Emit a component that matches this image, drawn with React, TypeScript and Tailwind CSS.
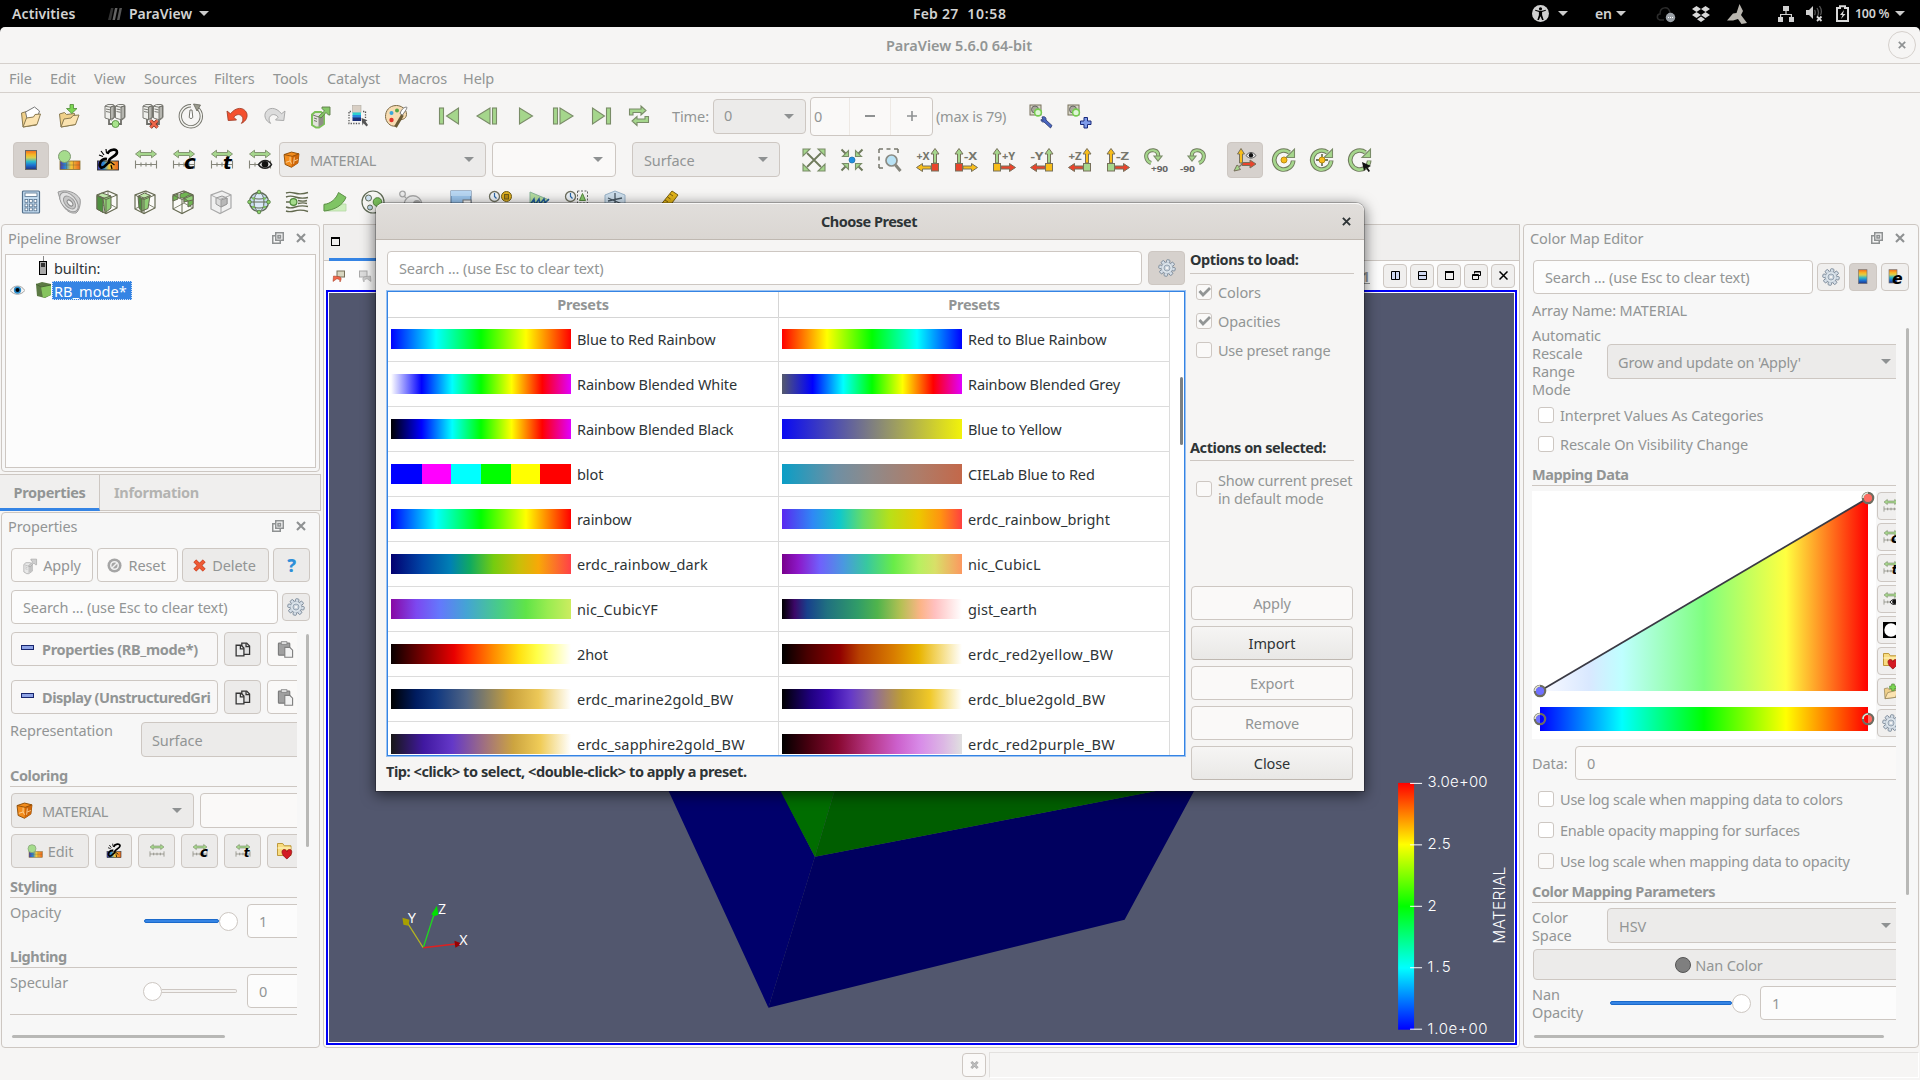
import React from "react";
import type { ReactNode } from "react";

type P = { children?: ReactNode; className?: string };

const G = "#a5d68c";
const D = "#6f7a5c";

function Ico({ children, className = "w-6 h-6" }: P) {
  return (
    <svg viewBox="0 0 24 24" className={"shrink-0 overflow-visible " + className} fill="none">
      {children}
    </svg>
  );
}

/* ---------- icon drawings ---------- */

const OpenI = () => (
  <Ico>
    <g stroke="#8a7a50" strokeWidth="1">
      <path d="M2.500 9l5-1.500 2 2 4-.5 4 12-13.500 2z" fill="#f0d08a" />
      <path d="M6.500 8l9-5 5 4-2 6-10 4z" fill="#fff" stroke="#777" />
      <path d="M4 23L7.500 14l7-1 1.500-2.500 5.500-.5L18 20.500z" fill="#fbe3b0" />
    </g>
  </Ico>
);
const SaveI = () => (
  <Ico>
    <g stroke="#8a7a50">
      <path d="M2.500 10l5-1.500 2 2 8-1 1 11L4 23z" fill="#f0d08a" />
      <path d="M4 23l3-8 7-1 2-2.500 6-.5-3.500 9.500z" fill="#fbe3b0" />
      <path d="M13 .5h3.500v4H20l-5.200 5L9.500 4.500H13z" fill="#7cd653" stroke="#4f8a36" strokeWidth=".8" />
    </g>
  </Ico>
);
const Server = ({ x }: { x: number }) => (
  <g stroke="#6e6e68" strokeWidth=".9">
    <path d={`M${x} 2l3-1.500h5l1.500 1v12l-3 2.500-6.500-2z`} fill="#efefec" />
    <path d={`M${x + 5.5} 3v12.500l3.500-2V1.800z`} fill="#b5b5af" />
    <path d={`M${x} 2.200l5.500 1 3.500-1.500M${x + 1} 5l4 .8M${x + 1} 7.500l4 .8`} />
  </g>
);
const ConnectI = () => (
  <Ico>
    <path d="M6 14v6h12v-6" stroke="#6e6e68" strokeWidth="1.800" />
    <Server x={2} /><Server x={12.5} />
    <circle cx="12.500" cy="20" r="3.500" fill="#a8e48c" stroke="#5f9a4a" />
  </Ico>
);
const DisconnectI = () => (
  <Ico>
    <path d="M6 14v6h12v-6" stroke="#6e6e68" strokeWidth="1.800" />
    <Server x={2} /><Server x={12.5} />
    <path d="M9.500 16.500l7 7M16.500 16.500l-7 7" stroke="#7a2b1e" strokeWidth="3.400" />
    <path d="M9.500 16.500l7 7M16.500 16.500l-7 7" stroke="#f0674a" strokeWidth="2.200" />
  </Ico>
);
const TimerI = () => (
  <Ico>
    <path d="M18 3.800A10.500 10.500 0 1 1 12 1.800" stroke="#74746c" strokeWidth="3.400" />
    <path d="M18 3.800A10.500 10.500 0 1 1 12 1.800" stroke="#f2f2ee" strokeWidth="1.500" />
    <path d="M14.500 0l7 1-3.500 6z" fill="#9a9a8e" stroke="#66665c" strokeWidth=".8" />
    <path d="M11 6h2l.8 7.500-1.800 1.200-1.800-1.200z" fill="#fff" stroke="#74746c" />
  </Ico>
);
const Arc = ({ fill, stroke }: { fill: string; stroke: string }) => (
  <path d="M2 7l1.200 9.500L11.500 16 8.800 13.200c2.400-3.400 7-3.600 8.800.2.700 2 .2 4-1.200 6 5-2.400 6.600-7 5.200-10.500C19 3 11 2.500 5.500 9.800z" fill={fill} stroke={stroke} strokeWidth=".9" />
);
const UndoI = () => <Ico><Arc fill="#f4502e" stroke="#a5412a" /></Ico>;
const RedoI = () => <Ico><g transform="translate(24 0) scale(-1 1)"><Arc fill="#dcdcdc" stroke="#a3a3a3" /></g></Ico>;
const ApplyI = ({ gray, className = "w-6 h-6" }: { gray?: boolean; className?: string }) => (
  <Ico className={className}>
    <path d="M4 10.500l3-2.500h6l3 2.500V20l-5 3.500h-3L4 21z" fill={gray ? "#e8e8e8" : "#e2e2dc"} stroke={gray ? "#a5a5a5" : "#7cc158"} strokeWidth={gray ? "1" : "2"} />
    <path d="M10.500 13v10l5-3v-9.500z" fill={gray ? "#c4c4c4" : "#8f8f86"} /><path d="M5 11l5.500 2 5-2.500M6 14l3 1M6 16.500l3 1" stroke={gray ? "#b5b5b5" : "#77776c"} />
    <path d="M10.500 12.500l6-5.500L14 4.500V3h8v8h-1.500L18 8.500 13 14z" fill={gray ? "#cfcfcf" : "#86c768"} stroke={gray ? "#a0a0a0" : "#5e7d48"} strokeWidth=".9" />
  </Ico>
);
const PickI = () => (
  <Ico>
    <rect x="6.500" y="1.500" width="8.500" height="7" fill="#d9cfc4" stroke="#b0aaa0" strokeWidth=".6" />
    <rect x="6.500" y="8.500" width="8.500" height="3" fill="#2bd0d0" /><rect x="6.500" y="11" width="8.500" height="3" fill="#2a86dc" /><rect x="6.500" y="13.500" width="8.500" height="3.500" fill="#1c2f77" />
    <path d="M5 7.500H3v12h12M17 7.500h2.500V14" stroke="#555" strokeDasharray="1.300 1.300" strokeWidth="1.300" />
    <path d="M15.500 14l6 2.200-2 1.300 2.500 3.500-1.500 1.500-3-3.200-1 2.200z" fill="#555" />
  </Ico>
);
const PaletteI = () => (
  <Ico>
    <path d="M12.500 1.500C5 1.500 1.500 7 1.500 12.500S6.500 23 11 22c3-.5 1-4 3.500-5.500 3-1.500 7.500-.5 8-6C22.800 5 17 1.500 12.500 1.500z" fill="#f7dcb2" stroke="#7c6a45" />
    <circle cx="13" cy="6.500" r="2" fill="#57a544" /><circle cx="7.500" cy="9" r="2" fill="#3aa7dd" />
    <circle cx="7.500" cy="16" r="2.200" fill="#e0362b" />
    <path d="M18.500 11L11.500 23" stroke="#6c5c36" strokeWidth="3" /><path d="M22.500 3c1 1-.5 3-4 8l-2.500-1.500C18 4 20.500 3.500 22.500 3z" fill="#fff" stroke="#777" />
  </Ico>
);
const s1 = { fill: G, stroke: "#7a8c68", strokeWidth: 1.1 };
const FirstI = () => <Ico><rect x="2.500" y="4" width="4" height="16" {...s1} /><path d="M21.500 4v16L9.500 12z" {...s1} /></Ico>;
const PrevI = () => <Ico><rect x="17.500" y="4" width="4" height="16" {...s1} /><path d="M15 4v16L2 12z" {...s1} /></Ico>;
const PlayI = () => <Ico><path d="M6.500 4v16l13-8z" {...s1} /></Ico>;
const NextI = () => <Ico><rect x="2.500" y="4" width="4" height="16" {...s1} /><path d="M9 4v16l13-8z" {...s1} /></Ico>;
const LastI = () => <Ico><rect x="17.500" y="4" width="4" height="16" {...s1} /><path d="M3.500 4v16l12-8z" {...s1} /></Ico>;
const LoopI = () => (
  <Ico>
    <path d="M2.500 11V5h11.500V2l5 4.500-5 4.500V8.500H6V11z" {...s1} />
    <path d="M21.500 12.500v6H10v3l-5-4.500 5-4.500V15h8v-2.500z" {...s1} />
  </Ico>
);

const Rainbow = ({ id }: { id: string }) => (
  <defs>
    <linearGradient id={id} x1="0" y1="0" x2="0" y2="1">
      <stop offset="0" stopColor="#ee6a22" /><stop offset=".22" stopColor="#f8b524" /><stop offset=".38" stopColor="#d8cf50" />
      <stop offset=".58" stopColor="#2fb8c8" /><stop offset=".78" stopColor="#1b6fd0" /><stop offset="1" stopColor="#22307e" />
    </linearGradient>
    <linearGradient id={id + "h"}>
      <stop offset="0" stopColor="#4a3aa8" /><stop offset=".3" stopColor="#2a8fd6" /><stop offset=".55" stopColor="#f3c93a" /><stop offset="1" stopColor="#e8641e" />
    </linearGradient>
  </defs>
);
const BarI = () => <Ico><Rainbow id="rb1" /><rect x="6.500" y="2.500" width="11" height="19" fill="url(#rb1)" stroke="#666" strokeWidth="1" /></Ico>;
const EditColorI = ({ className = "w-6 h-6" }: P) => (
  <Ico className={className}>
    <Rainbow id="rb2" />
    <rect x="3" y="13" width="20" height="8.500" fill="url(#rb2h)" stroke="#8a7030" strokeWidth=".8" />
    <path d="M3 17h20M9.500 13v8M16.500 13v8" stroke="#6a5a30" strokeWidth=".6" opacity=".6" />
    <circle cx="7.500" cy="8.500" r="6" fill="#a5dc8c" stroke="#7f9a72" />
  </Ico>
);
const SepColorI = ({ className = "w-6 h-6" }: P) => (
  <Ico className={className}>
    <Rainbow id="rb3" />
    <rect x="1.500" y="13" width="21" height="9" fill="url(#rb3h)" stroke="#333" strokeWidth=".9" />
    <path d="M11.500 6c1.500-5 10-6 9.500-1.500S12.500 9 13 13.500M11 11c-6-1-9 6-6 8.500 4 1.500 5-5 9.500-5.500" stroke="#000" strokeWidth="2.600" />
    <path d="M5 3l3 4M10 1l.5 4M3 7l4 1.500M14.500 14l4 3M15 17l1 4" stroke="#000" strokeWidth="1.200" />
  </Ico>
);
function RangeI({ k, className = "w-6 h-6" }: { k?: string; className?: string }) {
  return (
    <Ico className={className}>
      <path d="M1.500 6L6.500 2.200v2.300h11V2.200l5 3.800-5 3.800V7.500h-11v2.300z" {...s1} strokeWidth={0.9} />
      <path d="M1.500 12.500v8M22.500 12.500v8M1.500 16.500h21M7 14.500v4M12 14.500v4M17 14.500v4" stroke="#85857a" strokeWidth="1.100" />
      {k && k !== "eye" && <text x={k === "c" ? 12 : 13} y="21" fontFamily="DejaVu Sans" fontSize={k === "c" ? 20 : 18} fontWeight="bold" fontStyle="italic" fill="#000">{k}</text>}
      {k === "eye" && (
        <g><path d="M10.500 16.500c4-5.500 10-5.500 13 0-3 5-10 5-13 0z" fill="#e8e8e8" stroke="#222" strokeWidth="1.500" /><circle cx="17" cy="16.200" r="3.300" fill="#111" /></g>
      )}
    </Ico>
  );
}
const OrangeCube = ({ className = "w-[17px] h-[17px]" }: P) => (
  <Ico className={className}>
    <path d="M1.500 5L12 1.500 22.500 4 21 17l-9 6-9-4z" fill="#f28c1d" stroke="#8c4c08" strokeWidth="1.300" />
    <path d="M13 7.500L22.500 4 21 17l-9 6z" fill="#cf6608" /><path d="M1.500 5L13 7.500 22.500 4" stroke="#8c4c08" strokeWidth="1.200" />
    <path d="M4 16l6-2V8M10 14l2 4M16 9l-1 9M16 14l5-2" stroke="#ffdba8" strokeWidth="1.200" />
  </Ico>
);
const ResetCamI = () => (
  <Ico>
    <path d="M5 5l14 14M19 5L5 19" stroke={D} strokeWidth="1.800" />
    <g {...s1}><path d="M1 1h7L1 8zM23 1v7l-7-7zM1 23v-7l7 7zM23 23h-7l7-7z" /></g>
  </Ico>
);
const ZoomDataI = () => (
  <Ico>
    <path d="M1.500 1.500l5 5M22.500 1.500l-5 5M1.500 22.500l5-5M22.500 22.500l-5-5" stroke={D} strokeWidth="2" />
    <g {...s1}><path d="M8.500 8.500H2.500L8.500 2.500zM15.500 8.500h6L15.500 2.500zM8.500 15.500h-6L8.500 21.500zM15.500 15.500h6L15.500 21.500z" /></g>
    <circle cx="12" cy="12" r="3" fill="#1f8fe0" stroke="#1a6ba8" strokeWidth=".7" />
  </Ico>
);
const ZoomBoxI = () => (
  <Ico>
    <path d="M1 1h19M1 1v19M20 1v4M1 20h5" stroke="#77776c" strokeWidth="1.500" strokeDasharray="4 3.500" />
    <circle cx="13.500" cy="12.500" r="5.500" fill="#b9e2f5" stroke="#8b8b84" strokeWidth="1.700" />
    <path d="M17.500 17l5 6" stroke="#85857c" strokeWidth="3" />
  </Ico>
);
function AxisI({ label, flip, up, side, box }: { label: string; flip?: boolean; up: string; side: string; box: string }) {
  return (
    <Ico>
      <g transform={flip ? "translate(24 0) scale(-1 1)" : undefined} stroke="#77705a" strokeWidth="1">
        <path d="M3.500 15V6H1L5 .5 9 6H6.500v9z" fill={up} />
        <path d="M9 18h8.500v-2.500l6 4-6 4V21H9z" fill={side} />
        <rect x="1.500" y="15.500" width="7" height="7.500" fill={box} />
      </g>
      <text x={flip ? 0.5 : 10} y="12" fontFamily="Noto Sans" fontSize="11" fontWeight="bold" fill="#77776c" textLength="13" lengthAdjust="spacingAndGlyphs">{label}</text>
    </Ico>
  );
}
const R = "#e8442c", Y = "#f8bd1a";
const RotI = ({ neg }: { neg?: boolean }) => (
  <Ico>
    <g transform={neg ? "translate(24 0) scale(-1 1)" : undefined}>
      <path d="M7 15C1.500 13 1 6.500 4 4s8.500-2.500 10 1.500l.3 3" stroke={D} strokeWidth="4" />
      <path d="M7 15C1.500 13 1 6.500 4 4s8.500-2.500 10 1.500l.3 3" stroke={G} strokeWidth="2.200" />
      <path d="M10 8h8l-4 5z" {...s1} />
    </g>
    <text x={neg ? -2 : 7} y="24" fontFamily="Noto Sans" fontSize="9" fontWeight="bold" fill="#666" textLength={neg ? 15 : 17} lengthAdjust="spacingAndGlyphs">{neg ? "-90" : "+90"}</text>
  </Ico>
);
const AxesEyeI = () => (
  <Ico>
    <g stroke="#77705a">
      <path d="M6.500 15V6h-2L8 .5 11.500 6h-2v9z" fill={Y} /><path d="M9 14.500h8v-2.500l6 4-6 4v-2.500H9z" fill={R} />
      <path d="M10 15l-4 3.500-2-1.500L1 23l6.500-1.500-1.500-2z" fill={G} />
    </g>
    <path d="M13 7.500c3-4 7-4 10 0-3 3.500-7 3.500-10 0z" fill="#eee" stroke="#555" /><circle cx="18" cy="7.300" r="2.200" fill="#111" />
  </Ico>
);
function CenterI({ kind }: { kind: number }) {
  return (
    <Ico>
      <path d="M21.200 12.500A9.500 9.500 0 1 1 17.500 4.500" stroke={D} strokeWidth="4.600" /><path d="M21.200 13.200A9.500 9.500 0 1 1 17.500 4.500" stroke={G} strokeWidth="2.600" />
      <path d="M22.500 1v8.500h-8.500z" {...s1} />
      {kind === 1 && <path d="M12 6v12M6 12h12" stroke={D} strokeWidth="1.800" />}
      {kind < 2 && <circle cx="12" cy="12" r="3" fill={Y} stroke="#b98b14" />}
      {kind === 2 && <path d="M14 14l9 4-3.500 1.500L22 23l-1.500 1-2.500-4-2 3z" fill="#111" />}
    </Ico>
  );
}
const CamI = ({ plus }: { plus?: boolean }) => (
  <Ico>
    <rect x="1" y="1" width="11" height="10" fill="#d8d6c8" stroke="#77705a" /><circle cx="6" cy="5.500" r="3.500" fill="#aaa89c" stroke="#666" />
    <circle cx="9" cy="8.500" r="3.400" fill="#dff6d6" stroke="#76cc50" strokeWidth="1.600" />
    {plus ? <path d="M17 13.500h3.500V17H24v3.500h-3.500V24H17v-3.500h-3.500V17H17z" fill="#7f9cea" stroke="#1a2a7a" /> :
      <path d="M13 13c2-1 4.500 0 4 3l6 5.500-1.500 2.500-6.500-6c-2 .5-3-1-3-2.500l2 .8z" fill="#4a66c0" stroke="#27356b" strokeWidth=".8" />}
  </Ico>
);

const CalcI = () => (
  <Ico>
    <rect x="3.500" y="1" width="17" height="22" rx="1" fill="#c4dcf0" stroke="#54708c" strokeWidth="1.200" />
    <rect x="6" y="3" width="12" height="3.500" fill="#fff" stroke="#54708c" strokeWidth=".8" />
    {[9.5, 14, 18].map((y) => [6, 10.5, 15].map((x) => <rect key={`${x}-${y}`} x={x} y={y} width="2.800" height="2.800" fill="#fff" stroke="#54708c" strokeWidth=".8" />))}
  </Ico>
);
const ContourI = () => (
  <Ico>
    <path d="M1 2c8-3 18 0 22 7 1 5-1 12-4 14-8 1-14-5-18-21z" fill="#cfcfcf" stroke="#999" />
    <ellipse cx="12" cy="12" rx="7" ry="11.500" transform="rotate(-42 12 12)" fill="#e2e2e2" stroke="#999" />
    <ellipse cx="12.500" cy="12.500" rx="4.600" ry="7.500" transform="rotate(-42 12.500 12.500)" fill="#c6c6c6" stroke="#999" />
    <ellipse cx="13" cy="13" rx="2" ry="3.600" transform="rotate(-42 13 13)" fill="#efefef" stroke="#888" />
  </Ico>
);
function CubeI({ kind }: { kind: number }) {
  const gray = kind === 3;
  const st = gray ? "#a8a8a8" : "#666a52";
  return (
    <Ico>
      <path d="M13 1l9 4v13l-11 5.500L2 19V5z" fill={gray ? "#f0f0f0" : "#fafaf7"} stroke={st} strokeWidth="1.200" />
      {!gray && <path d="M13 1v12l9 5M13 13L2 19" stroke={st} strokeWidth=".8" />}
      {kind === 0 && <g stroke={st}><path d="M2 5.500L7 3l9 3-6 2.500z" fill="#bfe6aa" /><path d="M2 5.500l6 3v14L2 19z" fill="#4f9040" /><path d="M8 8.500L16 6v12l-6 5z" fill="#90cf76" /></g>}
      {kind === 1 && <g stroke={st}><path d="M5.500 6l6-3 6 2.500-5 3z" fill="#bfe6aa" /><path d="M5 6l4 3v13l-3-4z" fill="#4f9040" /><path d="M9 9l8-3.500-2 13L9 21z" fill="#90cf76" /></g>}
      {kind === 2 && <g stroke={st}><path d="M2 6l5-2v5l-5 2zM9 4l6-2 7 3v9l-5 3v-6l-4 1V8L9 8z" fill="#6fb552" /><path d="M13 8l5-3 4 1v4l-5 1z" fill="#90cf76" /></g>}
      {gray && <path d="M7 8l6-2 5 2v6l-6 3-5-3z" fill="#dcdcdc" stroke="#999" />}
      {gray && <path d="M12 10v7l6-3V8z" fill="#b8b8b8" stroke="#999" />}
      <path d="M2 5l9 4.500L22 5" stroke={st} strokeWidth="1" /><path d={gray ? "M12 17v6" : "M11 9.500v14"} stroke={st} strokeWidth="1" />
    </Ico>
  );
}
const GlyphI = () => (
  <Ico>
    <circle cx="12" cy="12" r="9.500" fill="#c5dbf2" stroke="#5f6a55" strokeWidth="1.300" />
    <ellipse cx="12" cy="12" rx="5" ry="9.500" stroke="#5f6a55" fill="#dbe9f8" /><path d="M4 7.500c5 2 11 2 16 0M4 16.500c5 2 11 2 16 0M2.500 12h19" stroke="#5f6a55" />
    {[[12, 2], [12, 22], [2.5, 12], [21.5, 12]].map(([x, y]) => <circle key={`${x}${y}`} cx={x} cy={y} r="1.800" fill="#8dd36e" stroke="#4f7a3c" strokeWidth=".8" />)}
    {[[6.5, 8.5], [17.5, 8.5], [6.5, 17], [17.5, 17]].map(([x, y]) => <circle key={`${x}${y}`} cx={x} cy={y} r="1.300" fill="#7cc65c" />)}
  </Ico>
);
const StreamI = () => (
  <Ico>
    <path d="M1 3c8-3 9 4 22-.5M1 7c9-3.500 9 3.500 22 .5M1 17c9 3.500 9-3.500 22-.5M1 21c8 3 9-4 22 .5M1 12h4M13 10.500c4 1 6 1 9 0M13 13.500c4-1 6-1 9 0" stroke="#62694e" strokeWidth="1.400" />
    <circle cx="8.500" cy="12" r="3.400" fill="#a5dc8c" stroke="#4f8a3a" strokeWidth="1.200" />
  </Ico>
);
const WarpI = () => (
  <Ico>
    <path d="M1 21v-7h22v7z" fill="#cdeebd" stroke="#b5d8a5" strokeWidth=".8" />
    <path d="M1 14.500C8 13.500 13 9 15.500 2.500l7.500 4.800C20 15 12 20 1 21z" fill="#7fc464" stroke="#5e8f48" />
  </Ico>
);
const GroupI = ({ gray }: { gray?: boolean }) =>
  gray ? (
    <Ico><circle cx="3.500" cy="4" r="2.800" stroke="#a8a8a8" fill="#eee" strokeWidth="1.300" /><path d="M5 10c3-6 14-8 18 2v12H9z" fill="#f0f0f0" /><path d="M5 14C7 3 21 3 23 14" stroke="#a8a8a8" strokeWidth="1.300" /><circle cx="18" cy="14" r="4" fill="#aaa" /><path d="M5 6l2 2" stroke="#aaa" strokeWidth="1.300" /></Ico>
  ) : (
    <Ico><circle cx="12" cy="12" r="11" fill="#f7f7f3" stroke="#5f6a55" strokeWidth="1.200" /><circle cx="16.500" cy="12" r="4.300" fill="#7cc45e" stroke="#4f7f38" /><circle cx="7.500" cy="8" r="3" fill="#cfe2f2" stroke="#5f6a55" /><circle cx="9" cy="17.500" r="2.500" fill="#bcd6e8" stroke="#5f6a55" /></Ico>
  );
const ExtractI = () => <Ico><rect x="2" y="1" width="20" height="16" fill="#9cc6ee" stroke="#56789c" /><rect x="2" y="1" width="20" height="5" fill="#b9d8f4" /><rect x="14" y="10" width="8" height="7" fill="#fff" stroke="#777" /></Ico>;
const ClockI = ({ g }: { g?: boolean }) => (
  <Ico><circle cx="5.500" cy="6.500" r="5" fill="#eef3f8" stroke="#6f705f" strokeWidth="1.300" /><path d="M5.500 3v3.500l2 2" stroke="#2a67a8" strokeWidth="1.200" />
    {g ? <g><path d="M12.500 1h10v12h-10z" stroke="#666" strokeDasharray="2 1.500" /><path d="M14.500 10.500l3-7 3 7z" fill="#8acb6d" stroke="#57883f" /></g> : <g><circle cx="17.500" cy="6.500" r="5" fill="#e0b020" stroke="#705d18" /><rect x="15.500" y="4.500" width="4" height="4.500" fill="#b98a10" stroke="#705d18" /></g>}
  </Ico>
);
const PlotI = () => <Ico><path d="M3 2l19 8-19 9z" fill="#b5deA0" stroke="#8ab49a" /><path d="M3 15l4-6 1 6 4-6 1 5 4-5 1 4 4-4" stroke="#245e9c" strokeWidth="1.500" /></Ico>;
const BoxAxesI = () => <Ico><path d="M12 1l10 4v10l-10 4-10-4V5z" fill="#cfe0ee" stroke="#9ab3c8" /><path d="M12 3v12M5 11l14-3M5 8l14 6" stroke="#4a5a66" strokeWidth="1.300" /></Ico>;
const RulerI = () => <Ico><path d="M14 1l6 4-12 16-7-4z" fill="#e5b618" stroke="#7a6010" /><path d="M12 4l3 2M9.500 7l3 2M7 10l3 2" stroke="#7a6010" /></Ico>;

const GearI = ({ className = "w-[18px] h-[18px]" }: P) => (
  <Ico className={className}>
    {[0, 45, 90, 135, 180, 225, 270, 315].map((a) => <rect key={a} x="9.700" y="1" width="4.600" height="7" rx="1.200" transform={`rotate(${a + 10} 12 12)`} fill="#d6dfe8" stroke="#7c8a99" strokeWidth="1.200" />)}
    <circle cx="12" cy="12" r="7.300" fill="#dde5ec" stroke="#9aa7b4" strokeWidth=".5" /><circle cx="12" cy="12" r="4" fill="#c8d2dc" stroke="#8694a3" /><circle cx="12" cy="12" r="1.800" fill="#f4f4f4" />
  </Ico>
);
const CopyI = () => (
  <Ico className="w-[17px] h-[17px]">
    <path d="M11 3h7l4 4v12H11z" fill="#e0e0e0" stroke="#333" strokeWidth="1.800" /><path d="M3 6h7l4 4v11H3z" fill="#ececec" stroke="#333" strokeWidth="1.800" /><path d="M9 6v5h5M17 3v5h5" stroke="#333" strokeWidth="1.800" />
  </Ico>
);
const PasteI = () => (
  <Ico className="w-[17px] h-[17px]">
    <rect x="2" y="3" width="16" height="17" rx="1" fill="#a0a0a0" stroke="#7c7c7c" strokeWidth="1.600" /><rect x="6" y="1" width="8" height="4" fill="#ddd" stroke="#7c7c7c" /><path d="M11 9h7l4 4v10H11z" fill="#f2f2f2" stroke="#808080" strokeWidth="1.600" />
  </Ico>
);
const HeartFolderI = () => (
  <Ico className="w-[18px] h-[18px]">
    <path d="M2 2h7l2 3h9v13H2z" fill="#f8dc80" stroke="#b8902c" strokeWidth="1.200" /><path d="M2 8h18" stroke="#fff2c0" strokeWidth="1.500" />
    <path d="M14.500 22.500C6 16.500 7 10 11 10c2 0 3.500 2 3.500 3 0-1 1.500-3 3.500-3 4 0 5 6.500-3.500 12.500z" fill="#d31b24" stroke="#8d1016" />
  </Ico>
);
const FloatI = () => (
  <svg viewBox="0 0 12 12" className="w-3 h-3 shrink-0" fill="none" stroke="#8e9192" strokeWidth="1.500">
    <rect x="3.750" y=".75" width="7.500" height="7.500" /><path d="M3 3.750H.75v7.500h7.500V9M6 3.500h2.500V6H6z" />
  </svg>
);
const CrossI = ({ c = "#8e9192", className = "w-[10px] h-[10px]" }: { c?: string; className?: string }) => (
  <svg viewBox="0 0 10 10" className={"shrink-0 " + className} stroke={c} strokeWidth="2.100"><path d="M1 1l8 8M9 1L1 9" /></svg>
);

/* ---------- small widgets ---------- */

const Caret = ({ className = "border-t-[#8e9192]" }: P) => (
  <span className={"w-0 h-0 shrink-0 border-x-[5px] border-t-[5px] border-x-transparent " + className} />
);
const Btn = ({ children, className = "" }: P) => (
  <div className={"shrink-0 flex items-center justify-center border border-[#cdc7c2] rounded-[4px] whitespace-nowrap " + className}>{children}</div>
);
const Field = ({ children, className = "" }: P) => (
  <div className={"shrink-0 flex items-center border border-[#cdc7c2] rounded-[4px] whitespace-nowrap overflow-hidden " + className}>{children}</div>
);
const Cell = ({ children, className = "w-[38px]" }: P) => <div className={"h-9 shrink-0 flex items-center justify-center " + className}>{children}</div>;
const Heading = ({ children, className = "" }: P) => (
  <div className={"shrink-0 font-bold border-b border-[#cdc7c2] leading-[18px] pb-[2px] whitespace-nowrap tracking-[-0.430px] " + className}>{children}</div>
);
function Check({ label, on, className = "", box = "bg-white" }: { label: ReactNode; on?: boolean; className?: string; box?: string }) {
  return (
    <div className={"shrink-0 flex items-center gap-[6px] " + className}>
      <div className={"w-4 h-4 shrink-0 rounded-[3px] border border-[#cdc7c2] flex items-center justify-center " + box}>
        {on && <svg viewBox="0 0 14 14" className="w-[14px] h-[14px]" fill="none" stroke="#929595" strokeWidth="2.800"><path d="M2.500 6l3.500 4L13 3" /></svg>}
      </div>
      <span className="leading-[18px] whitespace-nowrap">{label}</span>
    </div>
  );
}
const PanelTitle = ({ children }: P) => (
  <div className="h-[28px] pb-[2px] shrink-0 flex items-center pl-[6px] pr-[13px]">
    <span className="flex-1">{children}</span><FloatI /><CrossI className="w-[10px] h-[10px] ml-3" />
  </div>
);

/* ---------- preset data ---------- */

const JET = "linear-gradient(90deg,#00f,#0ff 25%,#0f0 50%,#ff0 75%,#f00)";
const tail = "#00f 17%,#0ff 34%,#0f0 50%,#ff0 67%,#f00 84%,#e000ff)";
const presets: [string, string][] = [
  ["Blue to Red Rainbow", JET],
  ["Red to Blue Rainbow", "linear-gradient(270deg,#00f,#0ff 25%,#0f0 50%,#ff0 75%,#f00)"],
  ["Rainbow Blended White", "linear-gradient(90deg,#fff," + tail],
  ["Rainbow Blended Grey", "linear-gradient(90deg,#555a6e," + tail],
  ["Rainbow Blended Black", "linear-gradient(90deg,#000," + tail],
  ["Blue to Yellow", "linear-gradient(90deg,#0a0af2,#7f7f80 50%,#f2f20a)"],
  ["blot", "linear-gradient(90deg,#00f 17.200%,#f0f 17.200% 33.300%,#0ff 33.300% 50%,#0f0 50% 66.500%,#ff0 66.500% 83%,#f00 83%)"],
  ["CIELab Blue to Red", "linear-gradient(90deg,#0a9ec6,#6f8fa3 30%,#8f8a8a 50%,#ad7d6a 75%,#c3684a)"],
  ["rainbow", JET],
  ["erdc_rainbow_bright", "linear-gradient(90deg,#5a28f0,#2f88f5 17%,#10c8cc 32%,#66dc66 45%,#b8e018 60%,#ecc800 76%,#ff9410 88%,#ff4040)"],
  ["erdc_rainbow_dark", "linear-gradient(90deg,#020070,#0048a8 18%,#0080b4 33%,#10aa60 44%,#74cc10 57%,#c8c008 71%,#f8a808 82%,#ff4048)"],
  ["nic_CubicL", "linear-gradient(90deg,#78008c,#8c18c8 9%,#7060fc 21%,#4a98e0 34%,#38c8a0 47%,#68ec48 62%,#b8f060 76%,#d8e068 85%,#fc9860)"],
  ["nic_CubicYF", "linear-gradient(90deg,#8808a4,#7c48f0 14%,#6478fc 27%,#44a4d4 42%,#48cc88 60%,#60e448 75%,#98ec50 87%,#ccec60)"],
  ["gist_earth", "linear-gradient(90deg,#000,#3c0868 7%,#18408c 14%,#207080 25%,#309c68 42%,#50b44c 53%,#b4c054 66%,#fcb488 77%,#ffc0c0 85%,#fff)"],
  ["2hot", "linear-gradient(90deg,#080000,#e80000 35%,#ff3000 43%,#ff8c00 57%,#ffe010 71%,#ffff48 81%,#fff)"],
  ["erdc_red2yellow_BW", "linear-gradient(90deg,#000,#480000 14%,#900000 32%,#b84000 43%,#d87c00 62%,#e8b400 76%,#f4d870 87%,#fff)"],
  ["erdc_marine2gold_BW", "linear-gradient(90deg,#000,#001c60 14%,#103880 25%,#506484 42%,#807c68 52%,#c8a03c 66%,#ecc858 82%,#fff)"],
  ["erdc_blue2gold_BW", "linear-gradient(90deg,#000,#200080 16%,#3808b0 26%,#6438c8 38%,#8c68a0 50%,#c0a030 67%,#f0c828 82%,#fff)"],
  ["erdc_sapphire2gold_BW", "linear-gradient(90deg,#181818,#4018a0 18%,#6438c8 34%,#a07080 52%,#cca440 68%,#f0cc58 83%,#fff)"],
  ["erdc_red2purple_BW", "linear-gradient(90deg,#000,#480010 15%,#880830 31%,#b83888 49%,#cc60cc 64%,#d88ce8 77%,#dcb8e4 90%,#e0e0e0)"],
];

/* ---------- window sections ---------- */

function TopBar() {
  return (
    <div className="h-[27px] shrink-0 bg-black text-[#d2d2d2] font-semibold text-[14px] tracking-[-0.150px] flex items-center relative">
      <span className="ml-3 w-[96px] leading-none tracking-[0.100px]">Activities</span>
      <svg viewBox="0 0 14 12" className="w-[14px] h-3"><path d="M3 0h2.500L3 12H0z" fill="#333" /><path d="M7 0h2.500L7 12H4.500z" fill="#666" /><path d="M11.500 0H14l-2.500 12H9z" fill="#555" /></svg>
      <span className="ml-[7px] mr-[6px] leading-none w-[64px] tracking-[0px]">ParaView</span><Caret className="border-t-[#ccc]" />
      <div className="absolute left-[913px] top-0 h-full flex items-center gap-[9px] whitespace-nowrap"><span className="tracking-[0.200px]">Feb 27</span><span className="tracking-[0.700px]">10:58</span></div>
      <div className="flex-1" />
      <div className="w-[388px] h-full flex items-center shrink-0">
        <svg viewBox="0 0 16 16" className="w-[17px] h-[17px]"><circle cx="8" cy="8" r="8" fill="#d0d0d0" /><circle cx="8" cy="3.500" r="1.500" /><path d="M3 5.500l3.500 1v3L5 14h1.500L8 10.500 9.500 14H11L9.500 9.500v-3l3.500-1v-1l-3.500.8h-3L3 4.500z" /></svg>
        <Caret className="border-t-[#ccc] ml-[9px]" />
        <span className="ml-[27px] mr-[4px] w-[17px]">en</span><Caret className="border-t-[#ccc]" />
        <svg viewBox="0 0 20 18" className="w-5 h-[18px] ml-[30px]" fill="none"><path d="M8 15H4c-4-1-3-6 0-6 0-8 9-8 10-1" stroke="#2c2c2c" strokeWidth="1.500" /><circle cx="14.500" cy="12.500" r="4.700" fill="#9aa0a6" /><path d="M12 12.500h1M14 12.500h1M16 12.500h1" stroke="#fff" strokeWidth="1.200" /></svg>
        <svg viewBox="0 0 18 16" className="w-[18px] h-4 ml-4" fill="#d8d8d8"><path d="M4.500 0L9 3 4.500 6 0 3zM13.500 0L18 3l-4.500 3L9 3zM4.500 6L9 9l-4.500 3L0 9zM13.500 6L18 9l-4.500 3L9 9zM9 10.500l4 2.700L9 16l-4-2.800z" /></svg>
        <svg viewBox="0 0 20 20" className="w-5 h-5 ml-[17px]" fill="#b8b5ae"><path d="M12.500 0l3.500 7-2 4 6 8-5.500 1-3.500-5-5 1.500H0l6-7 3.500-.5z" /></svg>
        <svg viewBox="0 0 16 16" className="w-[16px] h-[16px] ml-[31px]" fill="#d0d0d0"><path d="M5 0h6v5H5zM0 11h5v5H0zM11 11h5v5h-5zM7.400 5h1.200v3H14v3h-1.200V9H3.200v2H2V8h5.400z" /></svg>
        <svg viewBox="0 0 17 17" className="w-[17px] h-[17px] ml-[12px]" fill="none"><path d="M0 5h3l4-4v13l-4-4H0z" fill="#d0d0d0" /><path d="M8.500 5c1 1 1 4 0 5M11 3c2 3 2 6 0 9M13.500 1c2 3 2 7 1 9" stroke="#555" strokeWidth="1.300" /><path d="M11 11.500l4.500 4.500M15.500 11.500L11 16" stroke="#ddd" strokeWidth="1.800" /></svg>
        <svg viewBox="0 0 13 17" className="w-[13px] h-[17px] ml-[13px]" fill="none"><path d="M1 3h3V1.200h5V3h3v13H1z" stroke="#d8d8d8" strokeWidth="2" /><path d="M8 5L4 10h2.500L5 14l4.500-5H7z" fill="#d8d8d8" /></svg>
        <span className="ml-[6px] w-[40px] text-[12.500px] whitespace-nowrap tracking-[-0.300px]">100 %</span><Caret className="border-t-[#ccc]" />
      </div>
    </div>
  );
}

const menus: [string, string][] = [["File", "w-[41px]"], ["Edit", "w-[44px]"], ["View", "w-[50px]"], ["Sources", "w-[70px]"], ["Filters", "w-[59px]"], ["Tools", "w-[54px]"], ["Catalyst", "w-[71px]"], ["Macros", "w-[65px]"], ["Help", "w-[40px]"]];

function Toolbars() {
  return (
    <div className="h-[130px] shrink-0">
      <div className="h-[46px] flex items-center pl-3">
        <Cell><OpenI /></Cell><Cell><SaveI /></Cell>
        <Cell className="w-[38px] ml-2"><ConnectI /></Cell><Cell><DisconnectI /></Cell><Cell><TimerI /></Cell>
        <Cell className="w-[38px] ml-2"><UndoI /></Cell><Cell><RedoI /></Cell>
        <Cell className="w-[38px] ml-[7px]"><ApplyI /></Cell><Cell><PickI /></Cell><Cell><PaletteI /></Cell>
        <Cell className="w-[38px] ml-[15px]"><FirstI /></Cell><Cell><PrevI /></Cell><Cell><PlayI /></Cell><Cell><NextI /></Cell><Cell><LastI /></Cell><Cell><LoopI /></Cell>
        <span className="ml-[14px] w-[41px]">Time:</span>
        <Field className="w-[93px] h-[35px] bg-[#ecebea] pl-[10px] pr-[11px] justify-between"><span className="-mt-[2px]">0</span><Caret /></Field>
        <div className="ml-[4px] w-[123px] h-[39px] shrink-0 border border-[#cdc7c2] rounded-[4px] bg-[#faf9f8] flex items-stretch">
          <div className="w-[38px] pl-[3px] flex items-center">0</div>
          <div className="w-[41px] border-l border-[#eee9e4] flex items-center justify-center"><span className="w-[10px] h-[1.500px] bg-[#8e9192]" /></div>
          <div className="flex-1 border-l border-[#eee9e4] flex items-center justify-center"><svg viewBox="0 0 10 10" className="w-[10px] h-[10px]" stroke="#8e9192" strokeWidth="1.600"><path d="M5 0v10M0 5h10" /></svg></div>
        </div>
        <span className="ml-[3px] w-[73px] whitespace-nowrap tracking-[-0.250px]">(max is 79)</span>
        <Cell className="w-[38px] ml-[13px]"><CamI /></Cell><Cell><CamI plus /></Cell>
      </div>
      <div className="h-[41px] flex items-center">
        <div className="ml-[13px] w-9 h-9 rounded-[4px] bg-[#d6d1cd] border border-[#cdc7c2] flex items-center justify-center shrink-0"><BarI /></div>
        <Cell className="w-[38px] ml-[1px]"><EditColorI /></Cell><Cell className="w-[39px]"><SepColorI /></Cell><Cell><RangeI /></Cell><Cell><RangeI k="c" /></Cell><Cell><RangeI k="t" /></Cell><Cell><RangeI k="eye" /></Cell>
        <Field className="w-[207px] h-[35px] bg-[#ecebea] pl-[3px] pr-[11px]"><OrangeCube /><span className="ml-[10px] flex-1 tracking-[-0.300px]">MATERIAL</span><Caret /></Field>
        <Field className="ml-[6px] w-[124px] h-[35px] bg-[#faf9f8] pr-3 justify-end"><Caret /></Field>
        <Field className="ml-4 w-[148px] h-[35px] bg-[#ecebea] px-[11px] justify-between"><span>Surface</span><Caret /></Field>
        <Cell className="w-[38px] ml-[15px]"><ResetCamI /></Cell><Cell><ZoomDataI /></Cell><Cell><ZoomBoxI /></Cell>
        <Cell><AxisI label="+X" flip up={G} side={Y} box={R} /></Cell><Cell><AxisI label="-X" up={G} side={Y} box={R} /></Cell>
        <Cell><AxisI label="+Y" up={G} side={R} box={Y} /></Cell><Cell><AxisI label="-Y" flip up={G} side={R} box={Y} /></Cell>
        <Cell><AxisI label="+Z" flip up={Y} side={R} box={G} /></Cell><Cell><AxisI label="-Z" up={Y} side={R} box={G} /></Cell>
        <Cell><RotI /></Cell><Cell><RotI neg /></Cell>
        <div className="ml-[14px] w-9 h-9 rounded-[4px] bg-[#d6d1cd] border border-[#cdc7c2] flex items-center justify-center shrink-0"><AxesEyeI /></div>
        <Cell className="w-[38px] ml-[2px]"><CenterI kind={0} /></Cell><Cell><CenterI kind={1} /></Cell><Cell><CenterI kind={2} /></Cell>
      </div>
      <div className="h-[43px] flex items-center pl-3">
        <Cell><CalcI /></Cell><Cell><ContourI /></Cell><Cell><CubeI kind={0} /></Cell><Cell><CubeI kind={1} /></Cell><Cell><CubeI kind={2} /></Cell><Cell><CubeI kind={3} /></Cell>
        <Cell><GlyphI /></Cell><Cell><StreamI /></Cell><Cell><WarpI /></Cell><Cell><GroupI /></Cell><Cell><GroupI gray /></Cell>
        <Cell className="w-[38px] ml-3"><ExtractI /></Cell><Cell className="w-[39px] ml-[1px]"><ClockI /></Cell><Cell><PlotI /></Cell><Cell className="w-[38px]"><ClockI g /></Cell><Cell><BoxAxesI /></Cell>
        <Cell className="w-[38px] ml-[17px]"><RulerI /></Cell>
      </div>
    </div>
  );
}

function LeftColumn() {
  const enabled = "bg-[#ecebea]";
  return (
    <div className="w-[321px] shrink-0 flex flex-col">
      <div className="ml-[1px] w-[319px] h-[248px] shrink-0 border border-[#cdc7c2] rounded-[4px] bg-[#f7f7f7]">
        <PanelTitle>Pipeline Browser</PanelTitle>
        <div className="mt-[1px] ml-[3px] w-[311px] h-[214px] border border-[#cdc7c2] bg-[#fcfcfc] text-[#2e3436]">
          <div className="h-[24px] pl-[32px] flex items-center">
            <div className="w-[10px] flex flex-col items-center -mt-1"><span className="w-px h-[5px] bg-[#888]" /><div className="w-2 h-[14px] border border-black bg-[#aaa] flex flex-col items-center pt-px"><span className="w-1 h-1 bg-[#333]" /></div></div>
            <span className="ml-[6px] mt-[1px]">builtin:</span>
          </div>
          <div className="h-[21px] flex items-center mt-[1px]">
            <svg viewBox="0 0 16 12" className="w-[15px] h-[11px] ml-1"><path d="M0 6c4-6.500 12-6.500 16 0-4 5.500-12 5.500-16 0z" fill="#f4f4f4" stroke="#888" strokeWidth=".8" /><circle cx="8" cy="5.500" r="4" fill="#2a8ac8" /><circle cx="8" cy="5.500" r="2.200" fill="#000" /></svg>
            <svg viewBox="0 0 17 16" className="w-[17px] h-4 ml-[10px] -mt-[2px]"><path d="M1 2l6-2 9 2v11l-6 3-8-2z" fill="#5c7a44" /><path d="M6 5l10-2v10l-8 3z" fill="#86c45e" /><path d="M1 2l5 3 10-2" stroke="#4a6636" fill="none" /></svg>
            <span className="w-[80px] h-[19px] bg-[#3584e4] text-white border border-dotted border-[#cfe0f6] flex items-center pl-[1px] whitespace-nowrap tracking-[0.050px]">RB_mode*</span>
          </div>
        </div>
      </div>
      <div className="mt-[2px] h-[37px] shrink-0 border border-l-0 border-[#cdc7c2] bg-[#f0efee] flex font-bold tracking-[-0.300px]">
        <div className="w-[100px] -mb-px border-r border-[#cdc7c2] border-b-[3px] border-b-[#3584e4] flex items-center justify-center">Properties</div>
        <div className="flex-1 flex items-center pl-[14px] pb-[2px] text-[#b3b3b1]">Information</div>
      </div>
      <div className="mt-[1px] ml-[1px] w-[319px] h-[536px] shrink-0 border border-[#cdc7c2] rounded-[4px] bg-[#f7f7f7]">
        <PanelTitle>Properties</PanelTitle>
        <div className="mt-[7px] pl-[9px] flex gap-1">
          <Btn className="w-[82px] h-[34px] bg-[#faf9f8] gap-[5px]"><span className="-ml-[2px] flex"><ApplyI gray className="w-[17px] h-[17px]" /></span>Apply</Btn>
          <Btn className="w-[81px] h-[34px] bg-[#faf9f8] gap-[6px]"><svg viewBox="0 0 16 16" className="-ml-[2px] w-[15px] h-[15px]"><circle cx="8" cy="8" r="7.500" fill="#a5a5a5" /><circle cx="8" cy="8" r="4" fill="none" stroke="#f1f1f1" strokeWidth="1.600" /><path d="M5 11l6-6" stroke="#f1f1f1" strokeWidth="1.600" /></svg>Reset</Btn>
          <Btn className="w-[87px] h-[34px] bg-[#ecebea] gap-[6px]"><svg viewBox="0 0 14 14" className="-ml-[2px] w-[13px] h-[13px]"><path d="M2 2l10 10M12 2L2 12" stroke="#a83a20" strokeWidth="4.400" /><path d="M2 2l10 10M12 2L2 12" stroke="#ee5a36" strokeWidth="3.200" /></svg>Delete</Btn>
          <Btn className="w-[37px] h-[34px] bg-[#ecebea] text-[#2f8fd8] text-[18px] font-extrabold leading-none">?</Btn>
        </div>
        <div className="mt-2 pl-[9px] flex items-center gap-1">
          <Field className="w-[267px] h-[34px] bg-[#fcfcfc] pl-[11px]">Search ... (use Esc to clear text)</Field>
          <Btn className="w-7 h-7 bg-[#ecebea]"><GearI /></Btn>
        </div>
        <div className="mt-2 flex h-[396px]">
          <div className="ml-[8px] w-[287px] shrink-0 overflow-hidden flex flex-col">
            {["Properties (RB_mode*)", "Display (UnstructuredGri"].map((t, i) => (
              <div key={t} className="ml-[1px] mb-[14px] flex gap-[6px] shrink-0">
                <Btn className={"w-[207px] h-[34px] bg-[#f8f7f7] font-bold !justify-start pl-[9px] " + (i ? "tracking-[-0.480px]" : "tracking-[-0.330px]")}>
                  <span className="w-[13px] h-[5px] bg-[#8ea3e6] border border-[#17256e] mr-2 -mt-[3px] shrink-0" /><span className="w-[172px]">{t}</span>
                </Btn>
                <Btn className={"w-[37px] h-[34px] " + enabled}><CopyI /></Btn>
                <Btn className="w-[37px] h-[34px] bg-[#faf9f8]"><PasteI /></Btn>
              </div>
            ))}
            <div className="-mt-[6px] flex shrink-0">
              <span className="w-[131px] shrink-0 leading-4">Representation</span>
              <Field className="w-[200px] h-[35px] bg-[#ecebea] pl-[10px]">Surface</Field>
            </div>
            <Heading className="mt-[9px]">Coloring</Heading>
            <div className="ml-[1px] mt-[6px] flex gap-[6px] shrink-0">
              <Field className="w-[183px] h-[35px] bg-[#ecebea] pl-1 pr-[11px]"><OrangeCube /><span className="ml-[9px] flex-1 tracking-[-0.300px]">MATERIAL</span><Caret /></Field>
              <Field className="w-[130px] h-[35px] bg-[#faf9f8]" />
            </div>
            <div className="ml-[1px] mt-[6px] flex gap-[6px] shrink-0">
              <Btn className={"w-[78px] h-[34px] gap-[5px] " + enabled}><EditColorI className="w-4 h-4" />Edit</Btn>
              <Btn className={"w-[37px] h-[34px] " + enabled}><SepColorI className="w-4 h-4" /></Btn>
              <Btn className={"w-[37px] h-[34px] " + enabled}><RangeI className="w-4 h-4" /></Btn>
              <Btn className={"w-[37px] h-[34px] " + enabled}><RangeI k="c" className="w-4 h-4" /></Btn>
              <Btn className={"w-[37px] h-[34px] " + enabled}><RangeI k="t" className="w-4 h-4" /></Btn>
              <Btn className={"w-[37px] h-[34px] " + enabled}><span className="-ml-[2px] flex"><HeartFolderI /></span></Btn>
            </div>
            <Heading className="mt-[9px]">Styling</Heading>
            <div className="mt-[6px] flex h-[34px] shrink-0">
              <span className="w-[134px] shrink-0 leading-4">Opacity</span>
              <div className="w-[94px] flex items-center shrink-0"><div className="w-[75px] h-1 shrink-0 bg-[#3584e4] border border-[#1b6acb] rounded-full" /><div className="w-[19px] h-[19px] shrink-0 rounded-full bg-white border border-[#cdc7c2]" /></div>
              <Field className="ml-[9px] w-[100px] h-[34px] bg-[#fcfcfc] pl-[11px]">1</Field>
            </div>
            <Heading className="mt-[9px]">Lighting</Heading>
            <div className="mt-[6px] flex h-[34px] shrink-0">
              <span className="w-[133px] shrink-0 leading-4">Specular</span>
              <div className="w-[94px] flex items-center shrink-0"><div className="w-[19px] h-[19px] shrink-0 rounded-full bg-white border border-[#cdc7c2]" /><div className="flex-1 h-1 bg-[#f4f3f2] border border-l-0 border-[#cdc7c2] rounded-r-full" /></div>
              <Field className="ml-[10px] w-[100px] h-[34px] bg-[#fcfcfc] pl-[11px]">0</Field>
            </div>
            <div className="mt-[6px] h-px shrink-0 bg-[#cdc7c2]" />
          </div>
          <div className="ml-[9px] mt-[2px] w-[3px] h-[213px] rounded-full bg-[#b8b8b6]" />
        </div>
        <div className="mt-[7px] ml-[10px] w-[213px] h-[3px] rounded-full bg-[#b8b8b6]" />
      </div>
    </div>
  );
}

function SceneView() {
  return (
    <svg viewBox="0 0 1186 749" className="w-full h-full block bg-[#52576e]" fill="none">
      <g transform="translate(-328.500 -293)">
        <path d="M655 730L668.400 791 768.300 1008 814.800 857 781 791V700z" fill="#00006b" />
        <path d="M768.300 1008L814.800 857 1156 791V700H1216L1194.300 791 1124.800 920z" fill="#00005f" />
        <path d="M780.400 791H834.400L814.800 857z" fill="#006d00" />
        <path d="M834.400 791H1156.400L814.800 857z" fill="#005e00" />
        <path d="M422.800 948L407 923" stroke="#b5b520" strokeWidth="1.300" /><path d="M402 918l7 2-1 6-5-1z" fill="#a8a000" />
        <path d="M422.800 948L434.500 912" stroke="#20d820" strokeWidth="1.300" /><path d="M436.500 906l1.500 9-4.500 1.500-2.500-2z" fill="#00e000" />
        <path d="M422.800 948L457 944" stroke="#e02020" strokeWidth="1.300" /><path d="M454 941l8 3-7 4z" fill="#980000" />
        <g fill="#fff" fontFamily="Inter" fontSize="13"><text x="407" y="923">Y</text><text x="437.500" y="914">Z</text><text x="458.500" y="945">X</text></g>
        <defs><linearGradient id="lut" x1="0" y1="0" x2="0" y2="1"><stop offset="0" stopColor="#f00" /><stop offset=".25" stopColor="#ff0" /><stop offset=".5" stopColor="#0f0" /><stop offset=".75" stopColor="#0ff" /><stop offset="1" stopColor="#00f" /></linearGradient></defs>
        <rect x="1398.500" y="783" width="16" height="247" fill="url(#lut)" />
        {["3.0e+00", "2.5", "2", "1.5", "1.0e+00"].map((t, i) => (
          <g key={t}>
            <path d={`M1410.500 ${783.5 + i * 61.5}h12`} stroke="#fff" />
            <text x="1428" y={787.5 + i * 61.7} fill="#fff" fontFamily="Inter" fontWeight="300" fontSize="15" textLength={t.length > 4 ? 60 : t.length > 1 ? 23 : 9}>{t}</text>
          </g>
        ))}
        <text transform="translate(1505 944) rotate(-90)" fill="#fff" fontFamily="Inter" fontWeight="300" fontSize="15.500" textLength="77">MATERIAL</text>
      </g>
    </svg>
  );
}

function Center() {
  const b = "w-6 h-6 bg-[#f0efee]";
  return (
    <div className="ml-[2px] w-[1197px] h-[824px] shrink-0 border border-[#cdc7c2] rounded-b-[4px] bg-[#fcfcfc] flex flex-col">
      <div className="h-[36px] shrink-0 bg-[#f0efee] border-b border-[#cdc7c2] flex">
        <div className="ml-[5px] w-[120px] border-b-[3px] border-[#3584e4] -mb-px flex items-center pl-[2px]"><span className="w-[9px] h-[9px] border border-t-2 border-black" /></div>
      </div>
      <div className="h-[29px] shrink-0 flex items-center pl-[9px] pr-[4px]">
        <Ico className="w-3 h-3"><rect x="8" y="2" width="15" height="12" fill="#d8d6c0" stroke="#77705a" strokeWidth="2" /><path d="M0 23l1-11 9 1c7 1 8 4 4 11 0-5-3-7-7-6z" fill="#f0674a" stroke="#a0391f" /></Ico>
        <Ico className="w-3 h-3 ml-[14px]"><rect x="1" y="2" width="15" height="12" fill="#ddd" stroke="#aaa" strokeWidth="2" /><path d="M24 23l-1-11-9 1c-7 1-8 4-4 11 0-5 3-7 7-6z" fill="#ccc" stroke="#999" /></Ico>
        <div className="flex-1" />
        <span className="font-bold underline mr-[13px]">1</span>
        <div className="flex gap-[3px]">
          <Btn className={b}><svg viewBox="0 0 9 9" className="w-[9px] h-[9px]" fill="#cfd8f0" stroke="#000"><path d="M.5.5h8v8h-8zM4.500.5v8" /></svg></Btn>
          <Btn className={b}><svg viewBox="0 0 9 9" className="w-[9px] h-[9px]" fill="#cfd8f0" stroke="#000"><path d="M.5.5h8v8h-8zM.5 4.500h8" /></svg></Btn>
          <Btn className={b}><span className="w-[9px] h-[9px] border border-t-2 border-black" /></Btn>
          <Btn className={b}><svg viewBox="0 0 9 9" className="w-[9px] h-[9px]" fill="none" stroke="#000"><path d="M2.500 2.500V.5h6v4h-2M.5 3.500h6v5h-6zM.5 4.500h6M2.500 1h6" /></svg></Btn>
          <Btn className={b}><svg viewBox="0 0 9 9" className="w-[9px] h-[9px]" stroke="#000" strokeWidth="1.500"><path d="M.5.5l8 8M8.500.5l-8 8" /></svg></Btn>
        </div>
      </div>
      <div className="ml-[2px] mr-[2px] h-[755px] shrink-0 border-2 border-[#0000f5]"><div className="w-full h-full border border-white"><SceneView /></div></div>
    </div>
  );
}

function TransferFunction() {
  const handle = (x: number, y: number, c: string) => (
    <g key={`${x}-${y}`}><circle cx={x} cy={y} r="5.200" fill={c} stroke="#6d6d60" strokeWidth="2.200" /><path d={`M${x - 5} ${y}a5 5 0 015-5`} stroke="#e6e6d8" strokeWidth="1.600" fill="none" /></g>
  );
  return (
    <svg viewBox="0 0 344 248" className="w-[344px] h-[248px] shrink-0 bg-white block">
      <defs>
        <linearGradient id="tf"><stop offset="0" stopColor="#fafaff" /><stop offset=".15" stopColor="#d9e8ff" /><stop offset=".25" stopColor="#bfffff" /><stop offset=".5" stopColor="#7fff7f" /><stop offset=".75" stopColor="#ffff40" /><stop offset="1" stopColor="#f00" /></linearGradient>
        <linearGradient id="cb"><stop offset="0" stopColor="#00f" /><stop offset=".25" stopColor="#0ff" /><stop offset=".5" stopColor="#0f0" /><stop offset=".75" stopColor="#ff0" /><stop offset="1" stopColor="#f00" /></linearGradient>
      </defs>
      <path d="M8 200L336 7v193z" fill="url(#tf)" /><path d="M8 200L336 7" stroke="#3a3a44" strokeWidth="1.800" />
      <rect x="8" y="216" width="328" height="24" fill="url(#cb)" />
      {handle(8, 200, "#7070ff")}{handle(336, 7, "#ff6a60")}{handle(8, 228, "#7070ff")}{handle(336, 228, "#ff6a60")}
      <path d="M8 224v8a4 4 0 000-8" fill="#00f" /><path d="M336 224v8a4 4 0 010-8" fill="#f00" />
    </svg>
  );
}

function RightColumn() {
  const sb = "w-7 h-7 bg-[#f0efee] border border-[#cdc7c2] rounded-[4px] shrink-0 flex items-center justify-center";
  return (
    <div className="ml-[3px] w-[396px] h-[824px] shrink-0 border border-[#cdc7c2] rounded-[4px] bg-[#f7f7f7]">
      <PanelTitle>Color Map Editor</PanelTitle>
      <div className="mt-[7px] pl-[9px] flex items-center gap-1">
        <Field className="w-[280px] h-[34px] bg-[#fcfcfc] pl-[11px]">Search ... (use Esc to clear text)</Field>
        <Btn className="w-7 h-7 bg-[#f0efee]"><GearI /></Btn>
        <Btn className="w-7 h-7 bg-[#d6d1cd]"><Ico className="w-4 h-4"><rect x="5" y="1" width="13" height="21" fill="url(#rb1)" stroke="#777" /></Ico></Btn>
        <Btn className="w-7 h-7 bg-[#f0efee]"><Ico className="w-[16px] h-[16px]"><rect x="3" y="1" width="12" height="20" fill="url(#rb1)" stroke="#777" /><text x="8" y="23" fontFamily="DejaVu Sans" fontSize="23" fontWeight="bold" fontStyle="italic" fill="#000">e</text></Ico></Btn>
      </div>
      <div className="pl-[8px] mt-[7px] leading-[18px]">Array Name: MATERIAL</div>
      <div className="mt-[7px] flex h-[702px]">
        <div className="ml-[8px] w-[364px] shrink-0 overflow-hidden flex flex-col">
          <div className="flex items-start h-[73px] shrink-0">
            <span className="w-[75px] leading-[18px] shrink-0">Automatic Rescale Range Mode</span>
            <Field className="mt-[18px] w-[300px] h-[35px] bg-[#ecebea] pl-[10px] pr-[15px]"><span className="flex-1 tracking-[-0.180px]">Grow and update on 'Apply'</span><Caret /></Field>
          </div>
          <Check className="mt-[7px] h-[18px] pl-[6px]" label="Interpret Values As Categories" />
          <Check className="mt-[11px] h-[18px] pl-[6px]" label="Rescale On Visibility Change" />
          <Heading className="mt-[12px]">Mapping Data</Heading>
          <div className="mt-[5px] flex h-[248px] shrink-0">
            <TransferFunction />
            <div className="ml-[1px] mt-[1px] flex flex-col gap-[3px]">
              <div className={sb}><RangeI className="w-4 h-4" /></div><div className={sb}><RangeI k="c" className="w-4 h-4" /></div><div className={sb}><RangeI k="t" className="w-4 h-4" /></div><div className={sb}><RangeI k="eye" className="w-4 h-4" /></div>
              <div className={sb}><Ico className="w-4 h-4"><rect x="0" y="0" width="24" height="24" fill="#000" /><circle cx="12" cy="12" r="10" fill="#fff" /></Ico></div>
              <div className={sb}><HeartFolderI /></div>
              <div className={sb}><Ico className="w-[16px] h-[16px]"><path d="M2 7l5-1 2 2 10-2v14L3 22z" fill="#f0d08a" stroke="#8a7a50" /><path d="M3 22l4-9 15-4-3 11z" fill="#fbe3b0" stroke="#8a7a50" /><path d="M13 0h4v3h3v4h-3v3h-4V7h-3V3h3z" fill="#7cd653" stroke="#4f8a36" /></Ico></div>
              <div className={sb}><GearI /></div>
            </div>
          </div>
          <div className="mt-[7px] flex items-center h-[34px] shrink-0"><span className="w-[43px] shrink-0">Data:</span><Field className="w-[330px] h-[34px] bg-[#faf9f8] pl-[11px]">0</Field></div>
          <Check className="mt-[10px] h-[18px] pl-[6px] tracking-[-0.220px]" label="Use log scale when mapping data to colors" />
          <Check className="mt-[13px] h-[18px] pl-[6px] tracking-[-0.240px]" label="Enable opacity mapping for surfaces" />
          <Check className="mt-[13px] h-[18px] pl-[6px] tracking-[-0.240px]" box="bg-[#faf9f8]" label="Use log scale when mapping data to opacity" />
          <Heading className="mt-[12px]">Color Mapping Parameters</Heading>
          <div className="mt-[5px] flex items-center h-[35px] shrink-0">
            <span className="w-[75px] leading-[18px] shrink-0">Color<br />Space</span>
            <Field className="w-[300px] h-[35px] bg-[#ecebea] pl-[11px] pr-[15px]"><span className="flex-1">HSV</span><Caret /></Field>
          </div>
          <Btn className="mt-[6px] ml-[1px] w-[374px] h-[31px] bg-[#ecebea] gap-1"><span className="-ml-[2px] w-4 h-4 rounded-full bg-[#7f7f7f] border border-[#555]" />Nan Color</Btn>
          <div className="mt-[6px] flex items-center h-[34px] shrink-0">
            <span className="w-[78px] leading-[18px] shrink-0">Nan<br />Opacity</span>
            <div className="w-[122px] h-1 shrink-0 bg-[#3584e4] border border-[#1b6acb] rounded-full" /><div className="w-[19px] h-[19px] shrink-0 rounded-full bg-white border border-[#cdc7c2]" />
            <Field className="ml-[9px] w-[170px] h-[34px] bg-[#fcfcfc] pl-[11px]">1</Field>
          </div>
        </div>
        <div className="ml-[10px] mt-[2px] w-[3px] h-[567px] rounded-full bg-[#b8b8b6]" />
      </div>
      <div className="mt-[7px] ml-[10px] w-[350px] h-[3px] rounded-full bg-[#b8b8b6]" />
    </div>
  );
}

function Dialog() {
  const off = "w-[162px] h-[34px] bg-[#faf9f8] text-[#929595]";
  const on = "w-[162px] h-[34px] bg-gradient-to-b from-[#f6f5f4] to-[#e9e8e6] border-b-[#bfb8b1] text-[#2e3436]";
  return (
    <div className="absolute left-[376px] top-[203px] w-[988px] h-[588px] bg-[#f6f5f4] rounded-t-[8px] shadow-[0_3px_14px_1px_rgba(0,0,0,0.55),0_0_0_1px_rgba(0,0,0,0.23)] flex flex-col text-[#2e3436]">
      <div className="h-[37px] shrink-0 rounded-t-[8px] bg-gradient-to-b from-[#e1dedb] to-[#dad6d2] border-b border-[#bfb8b1] border-t border-t-[#f8f7f6] flex items-center justify-center font-bold relative">
        <span className="tracking-[-0.500px] -translate-x-px -translate-y-px">Choose Preset</span>
        <div className="absolute right-[13px] top-[13px] flex"><CrossI c="#2e3436" className="w-[9px] h-[9px]" /></div>
      </div>
      <div className="flex-1 flex">
        <div className="ml-[10px] w-[800px] flex flex-col">
          <div className="mt-[11px] ml-[1px] flex">
            <Field className="w-[755px] h-[34px] bg-white pl-[11px] text-[#929595]">Search ... (use Esc to clear text)</Field>
            <Btn className="ml-[6px] w-[37px] h-[34px] bg-[#d6d1cd]"><GearI /></Btn>
          </div>
          <div className="mt-[5px] w-[800px] h-[467px] shrink-0 border border-[#9ac1f1]">
            <div className="w-full h-full border border-[#3584e4] bg-white overflow-hidden flex relative">
              <div className="w-[782px] shrink-0 grid grid-cols-[391px_391px] auto-rows-[45px]">
                <div className="col-span-2 h-[25px] -mb-5 grid grid-cols-[391px_391px] font-bold text-[#929595] text-center leading-[25px] tracking-[-0.300px]">
                  <div className="border-r border-b border-[#d5d5d5]">Presets</div><div className="border-r border-b border-[#d5d5d5]">Presets</div>
                </div>
                {presets.map(([name, g]) => (
                  <div key={name} className="border-r border-b border-[#dcdcdc] flex items-center pb-[1px] -mt-5 h-[45px] gap-[6px] whitespace-nowrap pl-[3px]">
                    <div className="w-[180px] h-5 shrink-0" style={{ background: g }} /><span className={name.includes("red2") ? "tracking-[0.320px]" : name.includes("BW") ? "tracking-[0.200px]" : name.includes("_") ? "tracking-[0.120px]" : ""}>{name}</span>
                  </div>
                ))}
              </div>
              <div className="absolute right-[1px] top-[85px] w-[3px] h-[68px] rounded-full bg-[#7d8081]" />
            </div>
          </div>
          <div className="mt-[4px] font-bold leading-5 tracking-[-0.430px]">Tip: &lt;click&gt; to select, &lt;double-click&gt; to apply a preset.</div>
        </div>
        <div className="ml-[4px] w-[164px] flex flex-col text-[#929595]">
          <Heading className="mt-[10px] pb-[5px] text-[#2e3436]">Options to load:</Heading>
          <Check on className="mt-[9px] h-[18px] pl-[6px]" box="bg-[#faf9f8]" label="Colors" />
          <Check on className="mt-[11px] h-[18px] pl-[6px]" box="bg-[#faf9f8]" label="Opacities" />
          <Check className="mt-[11px] h-[18px] pl-[6px] tracking-[-0.250px]" box="bg-[#faf9f8]" label="Use preset range" />
          <Heading className="mt-[79px] pb-[4px] text-[#2e3436]">Actions on selected:</Heading>
          <Check className="mt-[10px] h-[36px] pl-[6px] tracking-[-0.160px]" box="bg-[#faf9f8]" label={<>Show current preset<br />in default mode</>} />
          <div className="mt-[79px] pl-[1px] flex flex-col gap-[6px]">
            <Btn className={off}>Apply</Btn><Btn className={on}>Import</Btn><Btn className={off}>Export</Btn><Btn className={off}>Remove</Btn><Btn className={on}>Close</Btn>
          </div>
        </div>
      </div>
    </div>
  );
}

export default function App() {
  return (
    <div className="w-[1920px] h-[1080px] relative overflow-hidden bg-black flex flex-col text-[14.500px] leading-5 tracking-[-0.100px] text-[#929595] font-['Noto_Sans',sans-serif]">
      <TopBar />
      <div className="flex-1 bg-[#f6f5f4] rounded-t-[5px] flex flex-col">
        <div className="h-[37px] shrink-0 border-b border-[#d5d0cc] flex items-center justify-center relative font-semibold tracking-[0px]">
          <span className="-ml-[2px]">ParaView 5.6.0 64-bit</span>
          <div className="absolute right-[4px] top-[4px] w-7 h-7 rounded-full border border-[#d5d0cc] flex items-center justify-center"><CrossI className="w-2 h-2" /></div>
        </div>
        <div className="h-[29px] shrink-0 border-b border-[#d5d0cc] flex items-center pl-[9px]">
          {menus.map(([m, w]) => <span key={m} className={"shrink-0 " + w}>{m}</span>)}
        </div>
        <Toolbars />
        <div className="mt-[1px] h-[824px] shrink-0 flex"><LeftColumn /><Center /><RightColumn /></div>
        <div className="h-[33px] flex pt-[5px]">
          <Btn className="ml-[962px] w-6 h-6 bg-[#faf9f8] text-[#a8a8a8]"><svg viewBox="0 0 10 10" className="w-[9px] h-[10px]" fill="none"><path d="M1.500 1.500l7 7M8.500 1.500l-7 7" stroke="#a8a8a8" strokeWidth="3" /><path d="M2 2l6 6M8 2L2 8" stroke="#d0d0d0" strokeWidth="1" /></svg></Btn>
          <div className="ml-[3px] -mt-[1px] w-[930px] h-[26px] border border-[#e3e1df] border-b-white border-r-white" />
        </div>
      </div>
      <Dialog />
    </div>
  );
}
